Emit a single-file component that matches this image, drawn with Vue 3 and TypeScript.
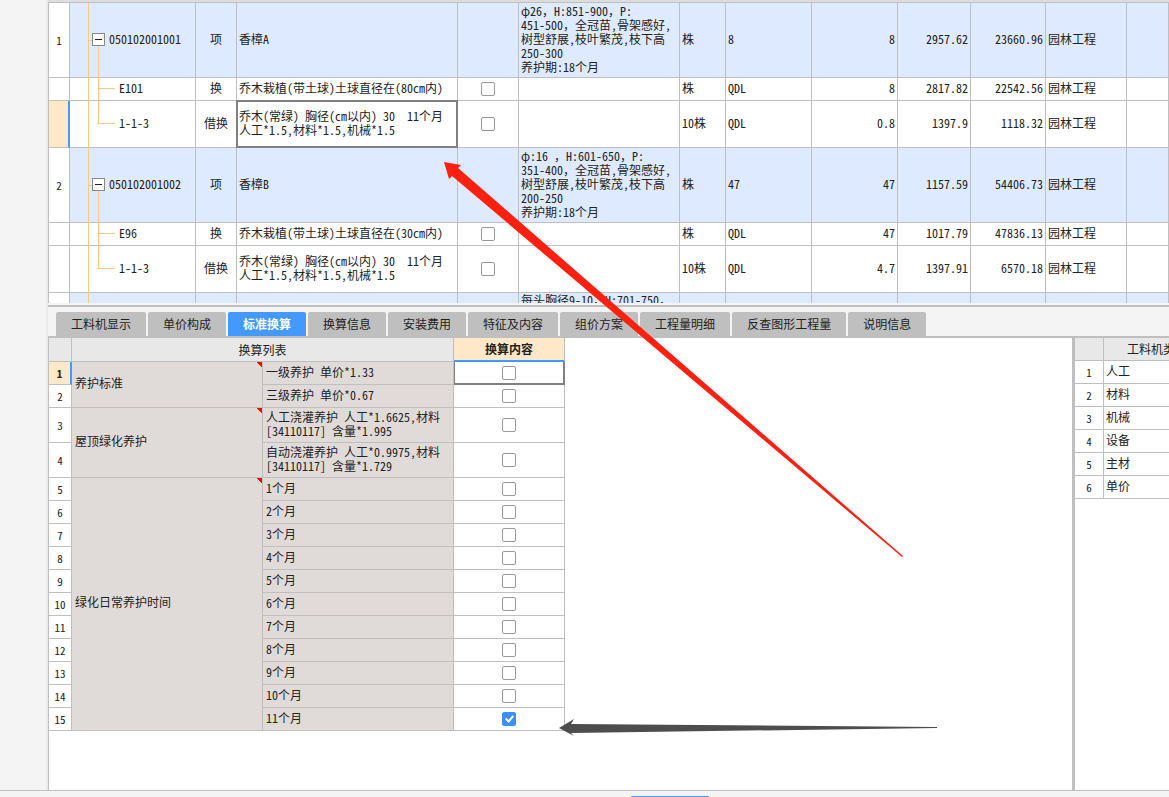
<script setup lang="ts">
import { ref } from 'vue'

interface Item {
  no: string
  code: string
  kind: string
  name: string
  desc: string
  unit: string
  expr: string
  qty: string
  price: string
  total: string
  major: string
  level: 'parent' | 'child' | 'last' | 'cut'
  height: 'tall' | 'mid' | 'short'
  selected?: boolean
}

const items = ref<Item[]>([
  { no: '1', code: '050102001001', kind: '项', name: '香樟A', desc: 'φ26，H:851-900，P:\n451-500，全冠苗,骨架感好,\n树型舒展,枝叶繁茂,枝下高\n250-300\n养护期:18个月', unit: '株', expr: '8', qty: '8', price: '2957.62', total: '23660.96', major: '园林工程', level: 'parent', height: 'tall' },
  { no: '', code: 'E101', kind: '换', name: '乔木栽植(带土球)土球直径在(80cm内)', desc: '', unit: '株', expr: 'QDL', qty: '8', price: '2817.82', total: '22542.56', major: '园林工程', level: 'child', height: 'short' },
  { no: '', code: '1-1-3', kind: '借换', name: '乔木(常绿) 胸径(cm以内) 30  11个月\n人工*1.5,材料*1.5,机械*1.5', desc: '', unit: '10株', expr: 'QDL', qty: '0.8', price: '1397.9', total: '1118.32', major: '园林工程', level: 'last', height: 'mid', selected: true },
  { no: '2', code: '050102001002', kind: '项', name: '香樟B', desc: 'φ:16 ，H:601-650，P:\n351-400，全冠苗,骨架感好,\n树型舒展,枝叶繁茂,枝下高\n200-250\n养护期:18个月', unit: '株', expr: '47', qty: '47', price: '1157.59', total: '54406.73', major: '园林工程', level: 'parent', height: 'tall' },
  { no: '', code: 'E96', kind: '换', name: '乔木栽植(带土球)土球直径在(30cm内)', desc: '', unit: '株', expr: 'QDL', qty: '47', price: '1017.79', total: '47836.13', major: '园林工程', level: 'child', height: 'short' },
  { no: '', code: '1-1-3', kind: '借换', name: '乔木(常绿) 胸径(cm以内) 30  11个月\n人工*1.5,材料*1.5,机械*1.5', desc: '', unit: '10株', expr: 'QDL', qty: '4.7', price: '1397.91', total: '6570.18', major: '园林工程', level: 'last', height: 'mid' },
  { no: '', code: '', kind: '', name: '', desc: '每头胸径9-10，H:701-750，', unit: '', expr: '', qty: '', price: '', total: '', major: '', level: 'cut', height: 'tall' },
])

const tabs = ['工料机显示', '单价构成', '标准换算', '换算信息', '安装费用', '特征及内容', '组价方案', '工程量明细', '反查图形工程量', '说明信息']
const activeTab = ref('标准换算')

interface Rule {
  group?: string
  span?: number
  text: string
  checked: boolean
}

const months: Rule[] = Array.from({ length: 11 }, (_, i) => ({
  text: `${i + 1}个月`,
  checked: i === 10,
  ...(i === 0 ? { group: '绿化日常养护时间', span: 11 } : {}),
}))

const rules = ref<Rule[]>([
  { group: '养护标准', span: 2, text: '一级养护 单价*1.33', checked: false },
  { text: '三级养护 单价*0.67', checked: false },
  { group: '屋顶绿化养护', span: 2, text: '人工浇灌养护 人工*1.6625,材料\n[34110117] 含量*1.995', checked: false },
  { text: '自动浇灌养护 人工*0.9975,材料\n[34110117] 含量*1.729', checked: false },
  ...months,
])

const categories = ['人工', '材料', '机械', '设备', '主材', '单价']
</script>

<template>
  <div class="app">
    <div class="workspace">
      <aside class="rail"></aside>
      <main class="content">
        <section class="items">
          <table class="grid items-grid">
            <colgroup>
              <col class="w-no"><col class="w-code"><col class="w-kind"><col class="w-name"><col class="w-check">
              <col class="w-desc"><col class="w-unit"><col class="w-qty"><col class="w-qty"><col class="w-price">
              <col class="w-total"><col class="w-major"><col>
            </colgroup>
            <tbody>
              <tr v-for="(r, i) in items" :key="i" :class="[r.height, r.level, { selected: r.selected }]">
                <td class="no">{{ r.no }}</td>
                <td class="code">
                  <div class="node">
                    <button v-if="r.level === 'parent'" class="toggle" type="button" :aria-label="'折叠 ' + r.code"></button>
                    <span>{{ r.code }}</span>
                  </div>
                </td>
                <td class="center">{{ r.kind }}</td>
                <td class="name">{{ r.name }}</td>
                <td class="pick">
                  <input v-if="r.level === 'child' || r.level === 'last'" type="checkbox" :aria-label="r.code">
                </td>
                <td class="desc">{{ r.desc }}</td>
                <td>{{ r.unit }}</td>
                <td>{{ r.expr }}</td>
                <td class="num">{{ r.qty }}</td>
                <td class="num">{{ r.price }}</td>
                <td class="num">{{ r.total }}</td>
                <td>{{ r.major }}</td>
                <td></td>
              </tr>
            </tbody>
          </table>
        </section>

        <nav class="tabs" role="tablist">
          <button
            v-for="t in tabs"
            :key="t"
            type="button"
            role="tab"
            :aria-selected="t === activeTab"
            :class="{ active: t === activeTab }"
            @click="activeTab = t"
          >{{ t }}</button>
        </nav>

        <div class="panes">
          <section class="rules">
            <table class="grid rules-grid">
              <colgroup>
                <col class="w-idx"><col class="w-rule"><col class="w-rule"><col class="w-content">
              </colgroup>
              <thead>
                <tr>
                  <th></th>
                  <th colspan="2">换算列表</th>
                  <th class="current">换算内容</th>
                </tr>
              </thead>
              <tbody>
                <tr v-for="(r, i) in rules" :key="i" :class="{ double: r.text.includes('\n'), first: i === 0 }">
                  <td class="no">{{ i + 1 }}</td>
                  <td v-if="r.group" class="shade group" :rowspan="r.span">{{ r.group }}</td>
                  <td class="shade">{{ r.text }}</td>
                  <td class="pick">
                    <input v-model="r.checked" type="checkbox" :aria-label="r.text">
                  </td>
                </tr>
              </tbody>
            </table>
          </section>
          <section class="categories">
            <table class="grid cat-grid">
              <colgroup><col class="w-cat-no"><col class="w-cat"></colgroup>
              <thead>
                <tr><th></th><th>工料机类</th></tr>
              </thead>
              <tbody>
                <tr v-for="(c, i) in categories" :key="c">
                  <td class="no">{{ i + 1 }}</td>
                  <td>{{ c }}</td>
                </tr>
              </tbody>
            </table>
          </section>
        </div>
      </main>
    </div>
    <footer class="status"><span class="marker"></span></footer>

    <svg class="arrows" width="960" height="760" viewBox="0 0 960 760" aria-hidden="true">
      <polygon fill="#ff2010" points="444,162 461,165 458,168 903,556 902,557 452,176 449,179" />
      <polygon fill="#4d4d4d" points="559,728 574,719 571,724 937,727 937,728 571,733 574,736" />
    </svg>
  </div>
</template>

<style>
body {
  margin: 0;
}
</style>

<style scoped>
.app {
  position: relative;
  display: flex;
  flex-direction: column;
  height: 100vh;
  overflow: hidden;
  background: #f4f4f4;
  color: #222;
  font: 12px/14px "Noto Sans Mono CJK SC", "Noto Sans CJK SC", monospace;
}
.workspace {
  flex: 1;
  min-height: 0;
  display: flex;
}
.rail {
  flex: none;
  box-sizing: border-box;
  width: 48px;
  border-right: 2px solid #eaeaea;
}
.content {
  flex: 1;
  min-width: 0;
  display: flex;
  flex-direction: column;
}
.items {
  flex: none;
  box-sizing: border-box;
  height: 303px;
  overflow: hidden;
  border-top: 2px solid #ddd;
  background: #fff;
}
.grid {
  table-layout: fixed;
  border-collapse: separate;
  border-spacing: 0;
  border-left: 1px solid #bfbfbf;
}
.grid td,
.grid th {
  box-sizing: border-box;
  padding: 0 2px 2px;
  border-right: 1px solid #bfbfbf;
  border-bottom: 1px solid #bfbfbf;
  background: #fff;
  text-align: left;
  white-space: pre;
  overflow: hidden;
}
.grid th {
  padding-bottom: 0;
  background: #e8e8e8;
  font-weight: 400;
  text-align: center;
}
.grid td.no,
.grid td.pick {
  padding: 0;
  text-align: center;
}
.grid td.center {
  padding: 0 0 2px;
  text-align: center;
}
.grid td.no {
  font-size: 11px;
}
.grid td.num {
  text-align: right;
}
.items-grid {
  width: 100%;
  border-top: 1px solid #bfbfbf;
}
.w-no { width: 21px; }
.w-code { width: 126px; }
.w-kind { width: 41px; }
.w-name { width: 221px; }
.w-check { width: 61px; }
.w-desc { width: 161px; }
.w-unit { width: 46px; }
.w-qty { width: 86px; }
.w-price { width: 73px; }
.w-total { width: 75px; }
.w-major { width: 81px; }
.tall { height: 75px; }
.short { height: 23px; }
.mid { height: 47px; }
.items-grid .parent td:not(.no),
.items-grid .cut td:not(.no) {
  background: #deeaff;
}
.items-grid .cut .desc {
  vertical-align: top;
}
.items-grid td.code {
  position: relative;
  overflow: visible;
  padding-left: 49px;
  background-clip: padding-box;
}
.items-grid .parent td.code {
  padding-left: 22px;
}
.node {
  display: flex;
  align-items: center;
  gap: 4px;
}
.code::before {
  content: "";
  position: absolute;
  left: 18px;
  top: 0;
  bottom: -1px;
  border-left: 1px solid #ffc880;
}
.code::after {
  content: "";
  position: absolute;
  left: 28px;
  top: 0;
  bottom: -1px;
  border-left: 1px solid #ffc880;
}
.parent .code::after {
  top: 50%;
}
.parent .code::before {
  width: 4px;
  background: linear-gradient(#ffc880, #ffc880) left center / 4px 1px no-repeat;
}
.last .code::after {
  bottom: 50%;
  width: 16px;
  border-bottom: 1px solid #ffc880;
}
.child .code::after {
  width: 16px;
  background: linear-gradient(#ffc880, #ffc880) 0 10px / 16px 1px no-repeat;
}
.cut .code::after {
  display: none;
}
.toggle {
  position: relative;
  z-index: 1;
  box-sizing: border-box;
  width: 13px;
  height: 13px;
  padding: 0;
  border: 1px solid #888;
  background: linear-gradient(#222, #222) center / 7px 1px no-repeat #fff;
}
.items-grid .selected td.no {
  border-right: 2px solid #4499ff;
  background: #ffe8c8;
}
.items-grid .selected td.name {
  position: relative;
  overflow: visible;
}
.selected .name::after {
  content: "";
  position: absolute;
  inset: -1px;
  border: 2px solid #808080;
}
input[type="checkbox"] {
  appearance: none;
  display: block;
  box-sizing: border-box;
  width: 14px;
  height: 14px;
  margin: 0 auto;
  border: 1px solid #999;
  border-radius: 2px;
  background: #fff;
}
input[type="checkbox"]:checked {
  border-color: #3b8fff;
  background: #3b8fff;
}
input[type="checkbox"]:checked::after {
  content: "";
  display: block;
  box-sizing: border-box;
  width: 5px;
  height: 8px;
  margin: 1px auto 0;
  border: solid #fff;
  border-width: 0 2px 2px 0;
  transform: rotate(42deg);
}
.tabs {
  flex: none;
  display: flex;
  gap: 2px;
  margin-top: 2px;
  padding: 5px 8px 0;
  border-top: 2px solid #bfbfbf;
  border-bottom: 2px solid #bfbfbf;
}
.tabs button {
  height: 24px;
  padding: 0 15px;
  border: 0;
  border-radius: 2px 2px 0 0;
  background: #bfbfbf;
  color: #222;
  font: 12px/24px "Noto Sans CJK SC", sans-serif;
  white-space: nowrap;
}
.tabs button.active {
  background: #4499ff;
  color: #fff;
  font-weight: 700;
}
.panes {
  flex: 1;
  min-height: 0;
  display: flex;
  background: #fff;
}
.rules {
  flex: 1;
  min-width: 0;
  box-shadow: inset 1px 0 #bfbfbf;
}
.rules-grid {
  width: 517px;
}
.w-idx { width: 23px; }
.w-rule { width: 191px; }
.w-content { width: 111px; }
.rules-grid thead tr { height: 24px; }
.rules-grid tbody tr { height: 23px; }
.rules-grid tbody tr.double { height: 35px; }
.rules-grid th.current {
  border-bottom: 2px solid #4499ff;
  background: #ffe8c8;
  font-weight: 700;
}
.rules-grid .first td.no {
  border-right: 2px solid #4499ff;
  background: #ffe8c8;
  font-weight: 700;
}
.rules-grid td.shade {
  padding-left: 3px;
  background: #e0dbd9;
}
.rules-grid td.group {
  padding-bottom: 4px;
  background: linear-gradient(to top right, transparent 50%, #f00 50%) top right / 6px 6px no-repeat #e0dbd9;
}
.rules-grid .first .pick {
  box-shadow: inset 1px 0 #808080, inset -1px -1px #808080;
  border-color: #808080;
}
.categories {
  flex: none;
  box-sizing: border-box;
  width: 97px;
  overflow: hidden;
  border-left: 3px solid #bfbfbf;
}
.cat-grid {
  width: 124px;
  border-left: 0;
}
.w-cat-no { width: 29px; }
.w-cat { width: 95px; }
.cat-grid tr { height: 23px; }
.status {
  flex: none;
  display: flex;
  justify-content: center;
  align-items: flex-end;
  box-sizing: border-box;
  height: 7px;
  border-top: 1px solid #bfbfbf;
  background: #f4f4f4;
}
.marker {
  width: 78px;
  height: 1px;
  margin-left: 171px;
  background: #4499ff;
}
.arrows {
  position: absolute;
  left: 0;
  top: 0;
  z-index: 2;
  pointer-events: none;
}
</style>
